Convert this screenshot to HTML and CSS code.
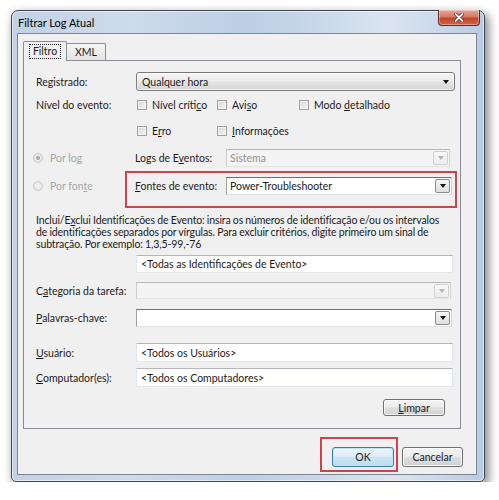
FILE: index.html
```html
<!DOCTYPE html>
<html lang="pt-BR">
<head>
<meta charset="utf-8">
<title>Filtrar Log Atual</title>
<link rel="stylesheet" href="styles.css">
</head>
<body>
<div class="window">
  <div class="titlebar">
    <span class="title">Filtrar Log Atual</span>
    <div class="close">
      <svg width="10" height="9" viewBox="0 0 10 9"><path d="M1.5 1 L8.5 8 M8.5 1 L1.5 8" stroke="#5a1a12" stroke-width="3.2" stroke-linecap="round"/><path d="M1.5 1 L8.5 8 M8.5 1 L1.5 8" stroke="#fff" stroke-width="1.8" stroke-linecap="round"/></svg>
    </div>
  </div>
  <div class="client">
    <div class="tabs">
      <div class="tab tab-active"><span class="focus">Filtro</span></div>
      <div class="tab tab-xml">XML</div>
    </div>
    <div class="panel">
      <div class="row row-reg">
        <span class="lbl">Re<u>g</u>istrado:</span>
        <div class="combo-list"><span>Qualquer hora</span><i class="arrow"></i></div>
      </div>
      <div class="row row-chk1">
        <span class="lbl">Nível do evento:</span>
        <div class="checks">
          <span class="check"><i class="box"></i><span>Nível críti<u>c</u>o</span></span>
          <span class="check"><i class="box"></i><span>Avi<u>s</u>o</span></span>
          <span class="check"><i class="box"></i><span>Modo <u>d</u>etalhado</span></span>
        </div>
      </div>
      <div class="row row-chk2">
        <span class="lbl"></span>
        <div class="checks">
          <span class="check"><i class="box"></i><span>E<u>r</u>ro</span></span>
          <span class="check"><i class="box"></i><span><u>I</u>nformações</span></span>
        </div>
      </div>
      <div class="row row-log">
        <span class="radio-opt"><i class="radio radio-on"></i><span>Por lo<u>g</u></span></span>
        <span class="lbl2">Logs de E<u>v</u>entos:</span>
        <div class="combo-dis combo-log"><span>Sistema</span><i class="dropbtn dropbtn-dis"><i class="arrow arrow-dis"></i></i></div>
      </div>
      <div class="row row-fonte">
        <span class="radio-opt"><i class="radio"></i><span>Por fon<u>t</u>e</span></span>
        <span class="lbl2"><u>F</u>ontes de evento:</span>
        <div class="combo-edit combo-fonte"><span>Power-Troubleshooter</span><i class="dropbtn"><i class="arrow"></i></i></div>
      </div>
      <p class="para">Inclui/E<u>x</u>clui Identificações de Evento: insira os números de identificação e/ou os intervalos de identificações separados por vírgulas. Para excluir critérios, digite primeiro um sinal de subtração. Por exemplo: 1,3,5-99,-76</p>
      <div class="row row-ids">
        <span class="lbl"></span>
        <div class="input">&lt;Todas as Identificações de Evento&gt;</div>
      </div>
      <div class="row row-cat">
        <span class="lbl">C<u>a</u>tegoria da tarefa:</span>
        <div class="combo-dis"><span></span><i class="dropbtn dropbtn-dis"><i class="arrow arrow-dis"></i></i></div>
      </div>
      <div class="row row-kw">
        <span class="lbl"><u>P</u>alavras-chave:</span>
        <div class="combo-edit"><span></span><i class="dropbtn"><i class="arrow"></i></i></div>
      </div>
      <div class="row row-user">
        <span class="lbl"><u>U</u>suário:</span>
        <div class="input">&lt;Todos os Usuários&gt;</div>
      </div>
      <div class="row row-comp">
        <span class="lbl"><u>C</u>omputador(es):</span>
        <div class="input">&lt;Todos os Computadores&gt;</div>
      </div>
      <div class="row row-clear">
        <div class="btn btn-clear"><span><u>L</u>impar</span></div>
      </div>
    </div>
    <div class="footer">
      <div class="okwrap"><div class="btn btn-ok">OK</div></div>
      <div class="btn btn-cancel">Cancelar</div>
    </div>
  </div>
</div>
</body>
</html>
```
FILE: styles.css
```css
html, body {
  margin: 0;
  background: #ffffff;
}
body {
  font-family: Lato, "Noto Sans", sans-serif;
  font-size: 10.5px;
  color: #1b1b1b;
}
u { text-decoration: underline; text-underline-offset: 1px; }

.window {
  width: 474px;
  height: 472px;
  box-sizing: border-box;
  margin: 10px 0 0 11px;
  border: 1px solid #3b4654;
  border-radius: 7px 7px 5px 5px;
  padding: 0 7px 6px 5px;
  display: flex;
  flex-direction: column;
  background: linear-gradient(90deg, #c2d2e4 0%, #cddbeb 25%, #bccfe5 50%, #c9d8ea 65%, #dbe5f0 80%, #b9cce3 100%);
  box-shadow: 3px 4px 10px 1px rgba(0, 0, 0, 0.45), inset 0 0 0 1px rgba(255, 255, 255, 0.55);
}

.titlebar {
  height: 22px;
  flex-shrink: 0;
  display: flex;
  align-items: center;
}
.title {
  font-size: 11px;
  color: #000;
  margin: 1px 0 0 1px;
}
.close {
  margin-left: auto;
  align-self: flex-start;
  margin-top: -1px;
  margin-right: -3px;
  width: 42px;
  height: 16px;
  box-sizing: border-box;
  border: 1px solid #5e2a22;
  border-top: none;
  border-radius: 0 0 4px 4px;
  background: linear-gradient(#e6a594, #d47a63 45%, #c2452b 55%, #cd6748);
  box-shadow: inset 0 0 0 1px rgba(255, 255, 255, 0.35);
  display: flex;
  align-items: center;
  justify-content: center;
}

.client {
  flex: 1;
  border: 1px solid #7b8794;
  background: #f0f0f0;
  padding: 7px 15px 0 5px;
  display: flex;
  flex-direction: column;
}

.tabs {
  display: flex;
  align-items: flex-end;
  height: 20px;
  margin-bottom: -1px;
}
.tab {
  box-sizing: border-box;
  height: 17px;
  border: 1px solid #898c95;
  border-bottom: none;
  border-radius: 2px 2px 0 0;
  display: flex;
  align-items: center;
  justify-content: center;
  margin-bottom: 1px;
  background: linear-gradient(#f4f4f4, #e4e4e4);
}
.tab-active {
  width: 44px;
  height: 20px;
  margin-bottom: 0;
  background: #f0f0f0;
  position: relative;
  z-index: 1;
}
.tab-xml {
  width: 40px;
  margin-left: -1px;
}
.focus {
  border: 1px dotted #222;
  padding: 0 3px;
  line-height: 13px;
}

.panel {
  height: 369px;
  box-sizing: border-box;
  border: 1px solid #898c95;
  padding: 0 7px 0 12px;
  display: flex;
  flex-direction: column;
}

.row {
  display: flex;
  align-items: center;
  flex-shrink: 0;
}
.lbl {
  width: 100px;
  flex-shrink: 0;
}
.lbl2 {
  width: 91px;
  flex-shrink: 0;
}

.row-reg { margin-top: 11px; height: 19px; }
.row-chk1 { margin-top: 6px; height: 16px; }
.row-chk2 { margin-top: 10px; height: 16px; }
.row-log { margin-top: 10px; height: 18px; }
.row-fonte { margin-top: 10px; height: 18px; position: relative; }
.row-ids { margin-top: 5px; height: 18px; }
.row-cat { margin-top: 9px; height: 17px; }
.row-kw { margin-top: 10px; height: 18px; }
.row-user { margin-top: 16px; height: 19px; }
.row-comp { margin-top: 6px; height: 19px; }
.row-clear { margin-top: 12px; height: 17px; justify-content: flex-end; }

.row-fonte::after {
  content: "";
  position: absolute;
  left: 89px;
  top: -6px;
  width: 332px;
  height: 37px;
  box-sizing: border-box;
  border: 2px solid #d3414a;
}

.combo-list {
  flex: 1;
  height: 19px;
  box-sizing: border-box;
  margin-right: -2px;
  border: 1px solid #7a7a7a;
  border-radius: 3px;
  background: linear-gradient(#f6f6f6, #eeeeee 45%, #e2e2e2 55%, #d6d6d6);
  box-shadow: inset 0 0 0 1px rgba(255, 255, 255, 0.7);
  display: flex;
  align-items: center;
  padding-left: 5px;
}
.combo-list .arrow { margin-left: auto; margin-right: 5px; }

.arrow {
  width: 0;
  height: 0;
  border-left: 3.5px solid transparent;
  border-right: 3.5px solid transparent;
  border-top: 4px solid #111;
}
.arrow-dis { border-top-color: #b4b4b4; }

.checks {
  display: grid;
  grid-template-columns: 80px 82px auto;
  margin-left: 1px;
}
.check {
  display: flex;
  align-items: center;
}
.box {
  width: 10px;
  height: 10px;
  box-sizing: border-box;
  border: 1px solid #9f9f9f;
  background: linear-gradient(135deg, #d6d6d6, #f6f6f6);
  box-shadow: inset 0 0 0 1px #f2f2f2;
  margin-right: 5px;
  flex-shrink: 0;
}

.radio-opt {
  width: 102px;
  margin-left: -3px;
  flex-shrink: 0;
  display: flex;
  align-items: center;
  color: #a6a6a6;
}
.radio {
  width: 10px;
  height: 10px;
  box-sizing: border-box;
  border-radius: 50%;
  border: 1px solid #c6c6c6;
  background: radial-gradient(#f6f6f6, #e0e0e0);
  margin-right: 7px;
  display: flex;
  align-items: center;
  justify-content: center;
}
.radio-on::after {
  content: "";
  width: 4px;
  height: 4px;
  border-radius: 50%;
  background: #a9a9a9;
}

.combo-dis {
  flex: 1;
  height: 100%;
  box-sizing: border-box;
  background: #f4f4f4;
  border: 1px solid;
  border-color: #b8b8b8 #d6d6d6 #e4e4e4 #cccccc;
  color: #8f8f8f;
  display: flex;
  align-items: center;
  padding-left: 3px;
  margin-right: 2px;
}
.combo-log { margin-right: 3px; }

.combo-edit {
  flex: 1;
  height: 100%;
  box-sizing: border-box;
  background: #ffffff;
  border: 1px solid;
  border-color: #6f6f6f #d0d0d0 #e2e2e2 #a2a2a2;
  display: flex;
  align-items: center;
  padding-left: 3px;
  margin-right: 1px;
}
.dropbtn {
  margin-left: auto;
  margin-right: 1px;
  width: 15px;
  height: 14px;
  box-sizing: border-box;
  border: 1px solid #8a8a8a;
  border-radius: 2px;
  background: linear-gradient(#f7f7f7, #dedede);
  display: flex;
  align-items: center;
  justify-content: center;
}
.dropbtn-dis {
  border-color: #d0d0d0;
  background: linear-gradient(#f8f8f8, #ececec);
}

.para {
  margin: 19px 0 0;
  padding-right: 6px;
  line-height: 12px;
  letter-spacing: -0.12px;
  word-spacing: -0.3px;
}

.input {
  flex: 1;
  height: 100%;
  box-sizing: border-box;
  background: #ffffff;
  border: 1px solid #e3e7eb;
  border-top-color: #b3b6bc;
  display: flex;
  align-items: center;
  padding-left: 4px;
}

.btn {
  box-sizing: border-box;
  border: 1px solid #707070;
  border-radius: 3px;
  background: linear-gradient(#f4f4f4, #ececec 45%, #dedede 52%, #d1d1d1);
  box-shadow: inset 0 0 0 1px rgba(255, 255, 255, 0.8);
  display: flex;
  align-items: center;
  justify-content: center;
}
.btn-clear {
  width: 62px;
  height: 17px;
  margin-right: 8px;
}

.footer {
  margin-top: 18px;
  display: flex;
  justify-content: flex-end;
  gap: 8px;
  margin-right: -2px;
}
.okwrap {
  position: relative;
}
.okwrap::after {
  content: "";
  position: absolute;
  left: -12px;
  top: -10px;
  width: 78px;
  height: 35px;
  box-sizing: border-box;
  border: 2px solid #d3414a;
}
.btn-ok {
  width: 62px;
  height: 20px;
  border-color: #3d7bad;
  background: linear-gradient(#ecf5fb, #dfeef8 45%, #cbe4f4 52%, #bcdcef);
  box-shadow: inset 0 0 0 1px #c4e2f5;
}
.btn-cancel {
  width: 61px;
  height: 20px;
}
```
